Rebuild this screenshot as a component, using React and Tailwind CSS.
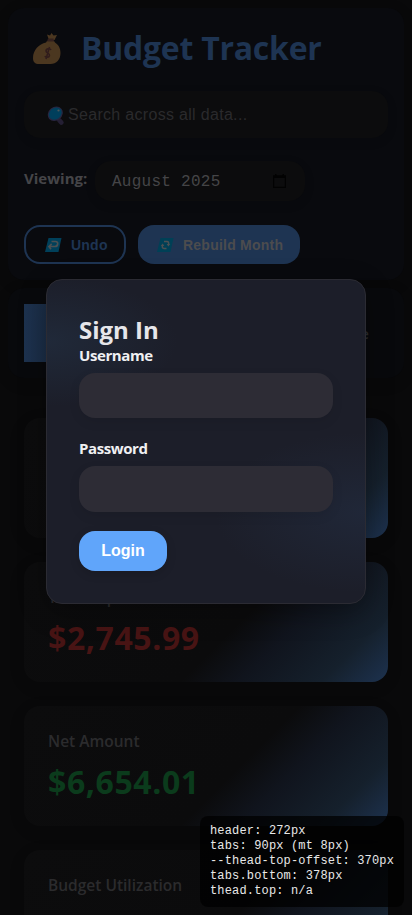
import React from "react";

function MoneyBag() {
  return (
    <svg className="mt-[2px] h-[34px] w-[30px] shrink-0" viewBox="0 0 30 34">
      <path d="M15 2.500l3 1 1.500-2.500 2 2.500 3.500-.5-2.500 5h-5.500z" fill="#4b3720" />
      <path d="M15 9h7l1 1.500c3.500 2.500 5.500 5.500 5.500 10.500 0 6.500-4 11-10 11H7C3 32 1 30 1 26c0-8 6-14 13-15.500z" fill="#4b3720" />
      <path d="M16 6.500h5.500l.5 3h-7z" fill="#33201d" />
      <path d="M19 18c-1-2-5-1.500-5 1 0 2.500 4 2 3.500 4.500-.5 2.500-4 2.300-4.500.5M17.500 15l-3.500 12" fill="none" stroke="#301c1c" strokeWidth="1.500" />
    </svg>
  );
}

function Magnifier() {
  return (
    <svg className="mt-[2px] h-[20px] w-[18px] shrink-0" viewBox="0 0 18 20">
      <path d="M12.500 14.500l1.800 2" stroke="#241f33" strokeWidth="4.800" strokeLinecap="round" />
      <ellipse cx="8.300" cy="7.800" rx="8" ry="6.800" transform="rotate(-40 8.300 7.800)" fill="#282640" />
      <ellipse cx="8.300" cy="7.600" rx="6.800" ry="5.600" transform="rotate(-40 8.300 7.600)" fill="#003f5c" />
      <circle cx="11.500" cy="4.500" r="1.100" fill="#4b5659" />
    </svg>
  );
}

function UndoIcon() {
  return (
    <svg className="h-[14px] w-[17px] shrink-0" viewBox="0 0 17 14">
      <path d="M3.500 0h13L13.500 14H0z" fill="#00405a" />
      <path d="M6.500 3.500h4c3.500 0 2.500 5-.5 5H5M6.700 5.800L4 8.600l2 2.600" fill="none" stroke="#4b5053" strokeWidth="1.700" />
    </svg>
  );
}

function RebuildIcon() {
  return (
    <svg className="h-[14px] w-[17px] shrink-0" viewBox="0 0 17 14">
      <path d="M3.500 0h13L13.500 14H0z" fill="#004056" />
      <path d="M7 3.500h3c1.800 0 1.800 1.500 1.600 3M9.500 10.500H7c-1.800 0-1.800-1.500-1.600-3" fill="none" stroke="#4b5053" strokeWidth="1.500" />
      <path d="M9.700 6h3.600l-2 2.600zM3.700 8h3.600L5.700 5.400z" fill="#4b5053" />
    </svg>
  );
}

function CalendarIcon() {
  return (
    <svg className="h-[14px] w-[13px]" viewBox="0 0 13 14">
      <path d="M.6 2h11.800v11.400H.6z" fill="none" stroke="#020202" strokeWidth="1.200" />
      <path d="M0 1.500h13V4H0zM2 0h1.500v3H2zM9.500 0H11v3H9.500z" fill="#020202" />
    </svg>
  );
}

function StatCard({ label, value, valueClass }) {
  return (
    <section className="h-[120px] shrink-0 rounded-[16px] bg-[linear-gradient(135deg,#0c0c0d_0%,#0b0b0c_57%,#10141d_69%,#15202c_86%,#1d324f_100%)] px-6 pt-[23px] shadow-[0_4px_18px_rgba(0,0,0,0.08)]">
      <div className="text-[15.5px] leading-6 font-semibold whitespace-nowrap text-[#2b2b2d]">{label}</div>
      <div className={"mt-[9px] text-[32px] leading-[40px] font-bold tracking-[0.600px] " + valueClass}>{value}</div>
    </section>
  );
}

export default function App() {
  return (
    <div className="relative h-[915px] w-[412px] overflow-hidden bg-[#09090a] font-['Open_Sans','Noto_Sans',sans-serif]">
      <div className="flex flex-col px-2 pt-2">
        <header className="h-[272px] rounded-[16px] bg-[#090a0e] px-4 pt-4 shadow-[0_4px_18px_rgba(0,0,0,0.08)]">
          <div className="flex h-[48px] items-center pl-2">
            <MoneyBag />
            <h1 className="ml-[19px] text-[32px] leading-[48px] font-bold tracking-[-0.250px] whitespace-nowrap text-[#1e3452]">Budget Tracker</h1>
          </div>
          <div className="mt-[19px] flex h-[47px] items-center rounded-[16px] bg-[#0c0c0d] pl-[23px] shadow-[0_3px_12px_rgba(0,0,0,0.08)]">
            <Magnifier />
            <span className="ml-[3px] font-['Liberation_Sans',sans-serif] text-[16px] tracking-[0.310px] text-[#2a2a2c]">Search across all data...</span>
          </div>
          <div className="mt-[23px] flex h-[40px]">
            <span className="mt-[5px] w-[71px] text-[15px] leading-6 font-bold tracking-[0.020px] whitespace-nowrap text-[#454548]">Viewing:</span>
            <div className="flex w-[210px] items-center justify-between rounded-[16px] bg-[#0c0c0d] pr-[19px] pl-[17px] shadow-[0_3px_12px_rgba(0,0,0,0.08)]">
              <span className="mt-[2px] font-['Liberation_Mono',monospace] text-[16px] tracking-[0.270px] text-[#454547]">August 2025</span>
              <CalendarIcon />
            </div>
          </div>
          <div className="mt-[24px] flex h-[39px] gap-3 font-['Liberation_Sans',sans-serif] text-[14px] font-bold">
            <button className="flex w-[102px] items-center gap-[10px] rounded-[16px] border-2 border-[#1e3452] pt-[1px] pl-[19px] tracking-[0.230px] text-[#1e3452]">
              <UndoIcon />
              <span className="-ml-px">Undo</span>
            </button>
            <button className="flex w-[162px] items-center gap-[9px] rounded-[16px] bg-[#1e3452] pt-[1px] pl-[19px] tracking-[0.230px] whitespace-nowrap text-[#4c4c4e]">
              <RebuildIcon />
              Rebuild Month
            </button>
          </div>
        </header>
        <nav className="mt-2 flex h-[90px] items-center justify-between rounded-[16px] bg-[#08090c] px-4 shadow-[0_4px_18px_rgba(0,0,0,0.08)]">
          <span className="h-[58px] w-[84px] bg-[linear-gradient(90deg,#1d324f,#14202e)]" />
          <span className="mr-[19px] text-[15px] font-semibold text-[#2b2b2d]">Income</span>
        </nav>
        <main className="mt-[40px] flex flex-col gap-6 px-4">
          <StatCard />
          <StatCard label="Total Expenses" value="$2,745.99" valueClass="text-[#481414]" />
          <StatCard label="Net Amount" value="$6,654.01" valueClass="text-[#0b3b1c]" />
          <StatCard label="Budget Utilization" />
        </main>
      </div>

      <div className="absolute top-[279px] left-[46px] flex h-[325px] w-[320px] flex-col items-start rounded-[16px] border border-[#2b2b33] bg-[#1c1e29] bg-[radial-gradient(130px_65px_at_0%_19%,#202939_0%,transparent_100%),radial-gradient(150px_80px_at_100%_72%,#202738_0%,transparent_100%)] px-8 pt-[35px] shadow-[0_8px_28px_rgba(0,0,0,0.3)]">
        <h2 className="text-[24px] leading-[29px] font-bold text-[#e6e6ea]">Sign In</h2>
        <label className="text-[15px] leading-[22px] font-bold tracking-[-0.400px] text-[#f0f0f2]">Username</label>
        <input className="mt-[7px] h-[45px] w-[254px] rounded-[16px] bg-[#2d2c35] px-4 shadow-[0_4px_12px_rgba(0,0,0,0.08)] outline-none" />
        <label className="mt-[19px] text-[15px] leading-[22px] font-bold tracking-[-0.400px] text-[#f0f0f2]">Password</label>
        <input type="password" className="mt-[7px] h-[46px] w-[254px] rounded-[16px] bg-[#2d2c35] px-4 shadow-[0_4px_12px_rgba(0,0,0,0.08)] outline-none" />
        <button className="mt-[19px] h-[40px] w-[88px] rounded-[16px] bg-[#60a5fa] font-['Liberation_Sans',sans-serif] text-[16px] font-bold text-white shadow-[0_3px_10px_rgba(0,0,0,0.15)]">Login</button>
      </div>

      <div className="absolute top-[816px] left-[200px] h-[91px] w-[204px] rounded-[8px] bg-black/75 px-[10px] pt-[8px] font-['Liberation_Mono',monospace] text-[12px] leading-[15px] tracking-[0.160px] whitespace-nowrap text-[#e8e8e8]">
        <div>header: 272px</div>
        <div>tabs: 90px (mt 8px)</div>
        <div>--thead-top-offset: 370px</div>
        <div>tabs.bottom: 378px</div>
        <div>thead.top: n/a</div>
      </div>
    </div>
  );
}
